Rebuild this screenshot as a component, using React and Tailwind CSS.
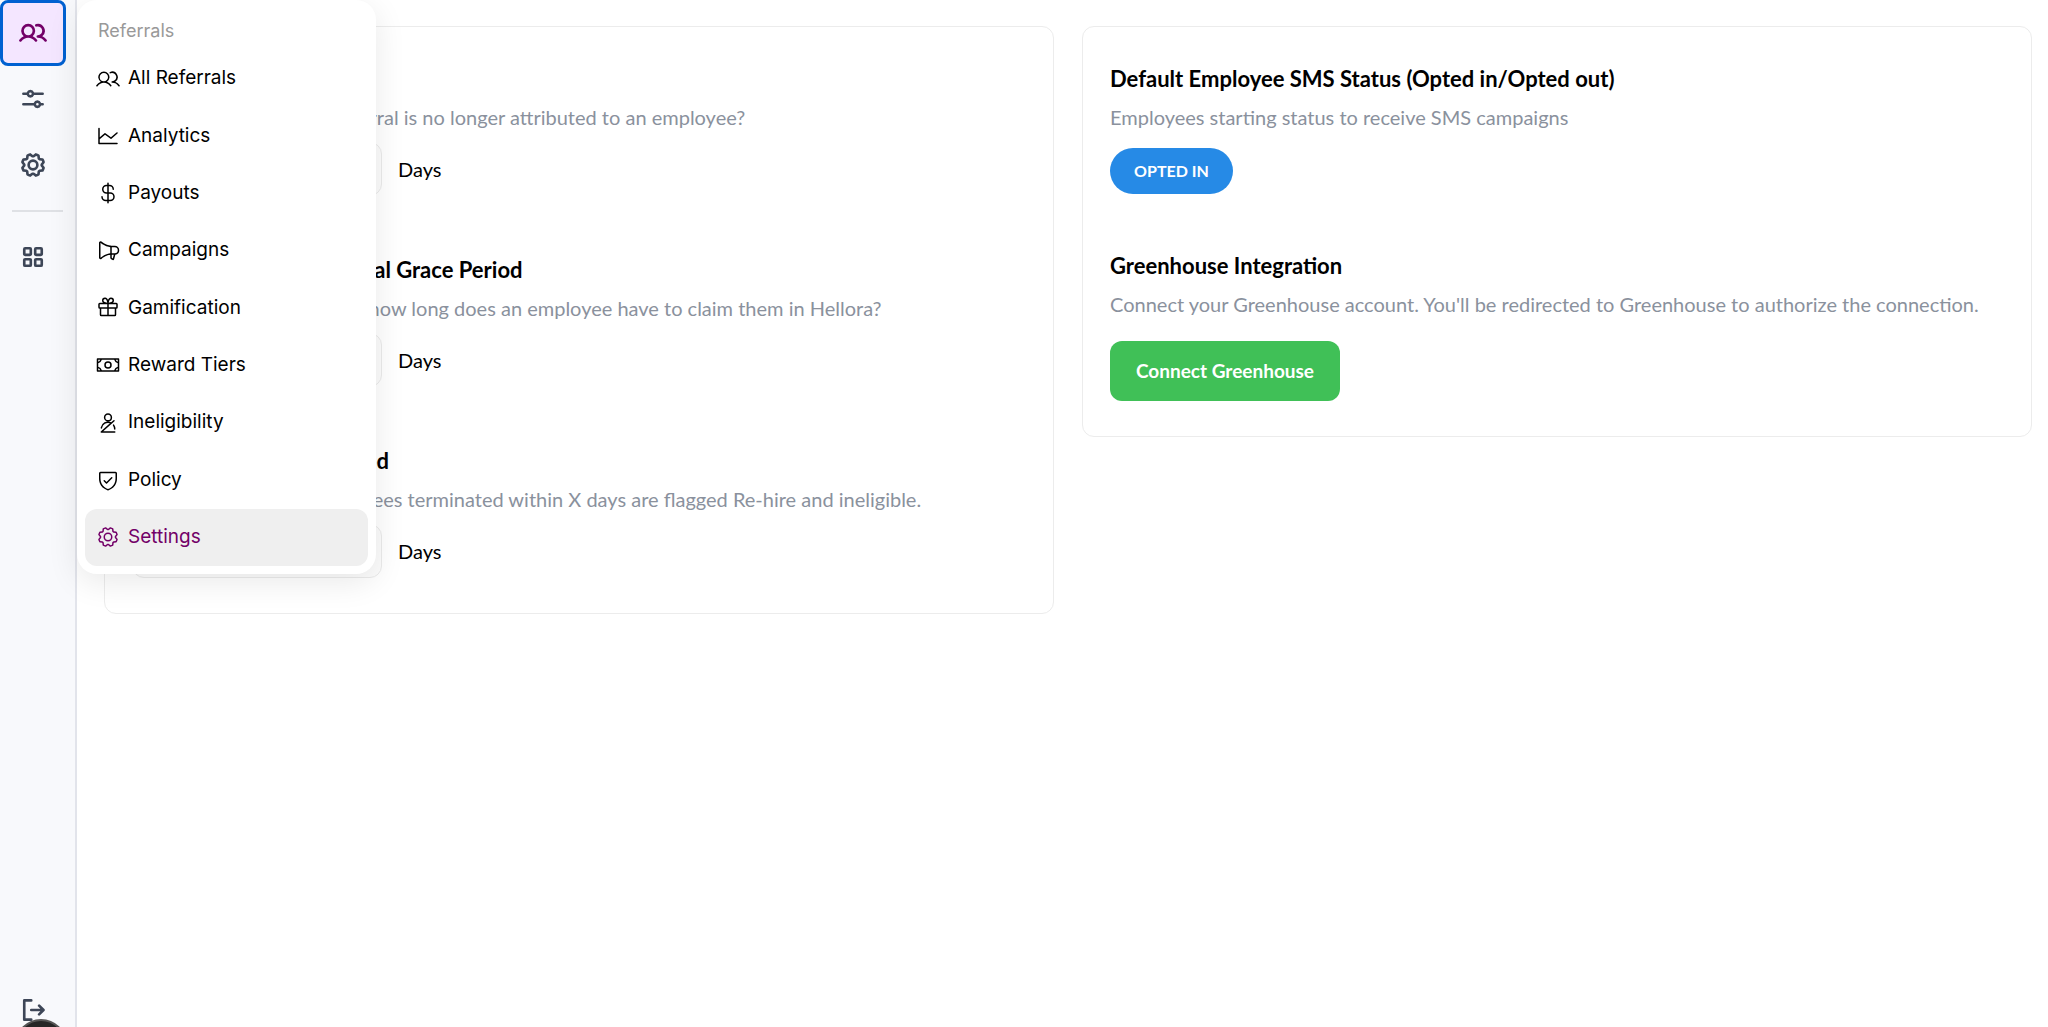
import { useState } from 'react';
import {
  PiChartLine,
  PiCurrencyDollar,
  PiGear,
  PiGearBold,
  PiGift,
  PiMegaphone,
  PiMoney,
  PiSeatbelt,
  PiShieldCheck,
  PiSignOutBold,
  PiSlidersHorizontalBold,
  PiSquaresFourBold,
  PiUsers,
  PiUsersBold,
} from 'react-icons/pi';

const menuItems = [
  { label: 'All Referrals', icon: PiUsers },
  { label: 'Analytics', icon: PiChartLine },
  { label: 'Payouts', icon: PiCurrencyDollar },
  { label: 'Campaigns', icon: PiMegaphone },
  { label: 'Gamification', icon: PiGift },
  { label: 'Reward Tiers', icon: PiMoney },
  { label: 'Ineligibility', icon: PiSeatbelt },
  { label: 'Policy', icon: PiShieldCheck },
  { label: 'Settings', icon: PiGear },
];

const periods = [
  {
    id: 'expiration',
    title: 'Referral Expiration',
    description: 'How many days until a referral is no longer attributed to an employee?',
  },
  {
    id: 'grace',
    title: 'Missing Employee Referral Grace Period',
    description: 'When a new hire is added, how long does an employee have to claim them in Hellora?',
  },
  {
    id: 'rehire',
    title: 'Re-Hire Ineligibility Period',
    description: 'Referrals for former employees terminated within X days are flagged Re-hire and ineligible.',
  },
];

function SidebarButton({ icon: Icon, label, active }) {
  return (
    <button
      type="button"
      aria-label={label}
      className={
        active
          ? 'flex h-[66px] w-[66px] items-center justify-center rounded-lg border-3 border-[#0061d1] bg-[#f4e6ff] text-[#730068]'
          : 'flex h-[66px] w-[66px] items-center justify-center rounded-lg text-[#3d4657]'
      }
    >
      <Icon size={28} />
    </button>
  );
}

function Sidebar() {
  return (
    <aside className="relative flex w-[77px] shrink-0 flex-col overflow-hidden border-r-2 border-[#e2e4eb] bg-[#f8f9fc]">
      <SidebarButton icon={PiUsersBold} label="Referrals" active />
      <SidebarButton icon={PiSlidersHorizontalBold} label="Preferences" />
      <SidebarButton icon={PiGearBold} label="Settings" />
      <hr className="mx-3 my-3 border-t-2 border-[#dfe1e5]" />
      <SidebarButton icon={PiSquaresFourBold} label="Apps" />
      <button
        type="button"
        aria-label="Log out"
        className="mt-auto flex h-[34px] w-[66px] items-center justify-center text-[#3d4657]"
      >
        <PiSignOutBold size={28} />
      </button>
      <div className="absolute -bottom-11 left-[15px] h-[52px] w-[52px] rounded-full border-2 border-[#555555] bg-[#262626]" />
    </aside>
  );
}

function ReferralsMenu() {
  return (
    <nav className="absolute top-0 left-[77px] w-[299px] rounded-[20px] bg-white px-2 pb-2 font-['Inter',sans-serif] shadow-[0_8px_32px_rgba(0,0,0,0.09)]">
      <h2 className="flex h-[50px] items-center px-[13px] pt-3 text-lg text-[#999999]">Referrals</h2>
      <ul className="grid h-[516px] auto-rows-fr">
        {menuItems.map(({ label, icon: Icon }) => (
          <li key={label} className="flex">
            <a
              href="#"
              className={
                label === 'Settings'
                  ? 'flex grow items-center gap-2 rounded-xl bg-[#efefef] px-[11px] text-[19px] text-[#730068]'
                  : 'flex grow items-center gap-2 rounded-xl px-[11px] text-[19px] text-black'
              }
            >
              <Icon size={24} />
              {label}
            </a>
          </li>
        ))}
      </ul>
    </nav>
  );
}

function PeriodField({ id, title, description }) {
  const [days, setDays] = useState('90');

  return (
    <section className="flex flex-col">
      <h3 className="text-[22px] leading-8 font-bold">{title}</h3>
      <p className="mt-1.5 text-xl leading-8 text-[#8a919d]">{description}</p>
      <div className="mt-[9px] flex items-center gap-4">
        <input
          id={id}
          type="text"
          value={days}
          onChange={(e) => setDays(e.target.value)}
          className="h-[54px] w-[250px] rounded-xl border border-[#ebebeb] bg-[#fcfcfc] px-4 text-xl"
        />
        <label htmlFor={id} className="text-xl leading-8">
          Days
        </label>
      </div>
    </section>
  );
}

function App() {
  return (
    <div className="relative flex min-h-screen bg-white font-['Lato',sans-serif] text-black">
      <Sidebar />
      <ReferralsMenu />
      <main className="grid grow grid-cols-2 items-start gap-7 py-[26px] pr-4 pl-[27px]">
        <div className="flex flex-col gap-[58px] rounded-xl border border-[#ececec] px-[27px] pt-9 pb-[35px]">
          {periods.map((period) => (
            <PeriodField key={period.id} {...period} />
          ))}
        </div>
        <div className="flex flex-col gap-14 rounded-xl border border-[#ececec] px-[27px] pt-9 pb-[35px]">
          <section>
            <h3 className="text-[22px] leading-8 font-bold">Default Employee SMS Status (Opted in/Opted out)</h3>
            <p className="mt-1.5 text-xl leading-8 text-[#8a919d]">Employees starting status to receive SMS campaigns</p>
            <button
              type="button"
              className="mt-[15px] flex h-[46px] w-[123px] items-center justify-center rounded-full bg-[#268ae6] text-base font-bold text-white"
            >
              OPTED IN
            </button>
          </section>
          <section>
            <h3 className="text-[22px] leading-8 font-bold">Greenhouse Integration</h3>
            <p className="mt-1.5 text-xl leading-8 text-[#8a919d]">
              Connect your Greenhouse account. You'll be redirected to Greenhouse to authorize the connection.
            </p>
            <button
              type="button"
              className="mt-[21px] flex h-[60px] w-[230px] items-center justify-center rounded-xl bg-[#40c057] text-[19px] font-bold text-white"
            >
              Connect Greenhouse
            </button>
          </section>
        </div>
      </main>
    </div>
  );
}

export default App;
